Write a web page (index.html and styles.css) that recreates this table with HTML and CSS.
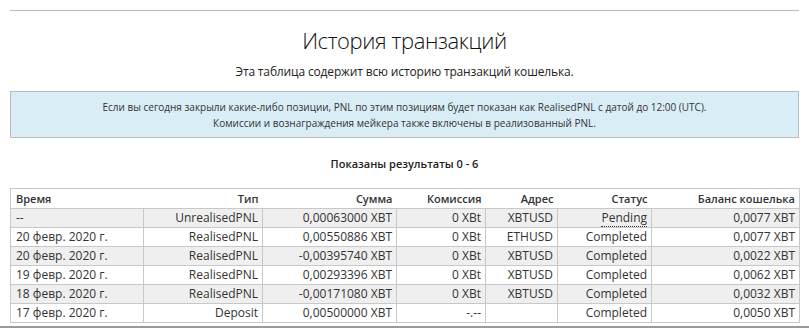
FILE: index.html
```html
<!DOCTYPE html>
<html lang="ru">
<head>
<meta charset="utf-8">
<title>История транзакций</title>
<link rel="stylesheet" href="styles.css">
</head>
<body>
<div class="page">
  <hr class="rule">
  <h1 class="title">История транзакций</h1>
  <p class="subtitle">Эта таблица содержит всю историю транзакций кошелька.</p>
  <div class="info">
    <p>Если вы сегодня закрыли какие-либо позиции, PNL по этим позициям будет показан как RealisedPNL с датой до 12:00 (UTC).</p>
    <p>Комиссии и вознаграждения мейкера также включены в реализованный PNL.</p>
  </div>
  <p class="count">Показаны результаты 0 - 6</p>
  <table class="tx">
    <colgroup>
      <col class="c1"><col class="c2"><col class="c3"><col class="c4"><col class="c5"><col class="c6"><col class="c7">
    </colgroup>
    <thead>
      <tr><th class="left">Время</th><th>Тип</th><th>Сумма</th><th>Комиссия</th><th>Адрес</th><th>Статус</th><th>Баланс кошелька</th></tr>
    </thead>
    <tbody>
      <tr><td class="left">--</td><td>UnrealisedPNL</td><td>0,00063000 XBT</td><td>0 XBt</td><td>XBTUSD</td><td><span class="pending">Pending</span></td><td>0,0077 XBT</td></tr>
      <tr><td class="left">20 февр. 2020 г.</td><td>RealisedPNL</td><td>0,00550886 XBT</td><td>0 XBt</td><td>ETHUSD</td><td>Completed</td><td>0,0077 XBT</td></tr>
      <tr><td class="left">20 февр. 2020 г.</td><td>RealisedPNL</td><td>-0,00395740 XBT</td><td>0 XBt</td><td>XBTUSD</td><td>Completed</td><td>0,0022 XBT</td></tr>
      <tr><td class="left">19 февр. 2020 г.</td><td>RealisedPNL</td><td>0,00293396 XBT</td><td>0 XBt</td><td>XBTUSD</td><td>Completed</td><td>0,0062 XBT</td></tr>
      <tr><td class="left">18 февр. 2020 г.</td><td>RealisedPNL</td><td>-0,00171080 XBT</td><td>0 XBt</td><td>XBTUSD</td><td>Completed</td><td>0,0032 XBT</td></tr>
      <tr><td class="left">17 февр. 2020 г.</td><td>Deposit</td><td>0,00500000 XBT</td><td>-.--</td><td></td><td>Completed</td><td>0,0050 XBT</td></tr>
    </tbody>
  </table>
</div>
<div class="footer-line"></div>
</body>
</html>
```

FILE: styles.css
```css
html, body {
  margin: 0;
  padding: 0;
  background: #fff;
}
body {
  font-family: "Open Sans", "Liberation Sans", sans-serif;
  color: #333;
  overflow: hidden;
}
.page {
  padding: 10px 10px 0;
}
.rule {
  margin: 0;
  border: 0;
  border-top: 1px solid #bbb;
  height: 0;
}
.title {
  margin: 13px 0 0;
  font-size: 22px;
  font-weight: 300;
  letter-spacing: -0.4px;
  line-height: 33px;
  text-align: center;
  color: #111;
}
.subtitle {
  margin: 6px 0 0;
  font-size: 12px;
  letter-spacing: -0.15px;
  line-height: 18px;
  text-align: center;
  color: #222;
}
.info {
  margin-top: 10px;
  background: #d9edf7;
  border: 1px solid #bbb;
  padding: 7px 0 6px;
  text-align: center;
  font-size: 10px;
  line-height: 16px;
  color: #333;
}
.info p {
  margin: 0;
}
.count {
  margin: 17px 0 0;
  font-size: 11px;
  font-weight: 600;
  line-height: 18px;
  text-align: center;
  color: #222;
}
.tx {
  margin-top: 15px;
  width: 100%;
  border-collapse: collapse;
  table-layout: fixed;
  border: 1px solid #c8c8c8;
  font-size: 12px;
}
.c1 { width: 133px; }
.c2 { width: 119px; }
.c3 { width: 134px; }
.c4 { width: 89px; }
.c5 { width: 72px; }
.c6 { width: 94px; }
.c7 { width: 148px; }
.tx th {
  font-weight: 600;
  font-size: 11px;
  text-align: right;
  height: 19px;
  padding: 0 4px 0 5px;
  color: #333;
  border-bottom: 1px solid #c8c8c8;
}
.tx td {
  text-align: right;
  height: 18px;
  padding: 0 4px 0 5px;
  border: 1px solid #c8c8c8;
  line-height: 16px;
  white-space: nowrap;
  color: #333;
}
.tx .left {
  text-align: left;
}
.tx tbody tr:nth-child(odd) td {
  background: #efefef;
}
.pending {
  border-bottom: 1px dotted #333;
}
.footer-line {
  position: absolute;
  left: 0;
  right: 0;
  top: 326px;
  height: 2px;
  background: #999;
}
```
